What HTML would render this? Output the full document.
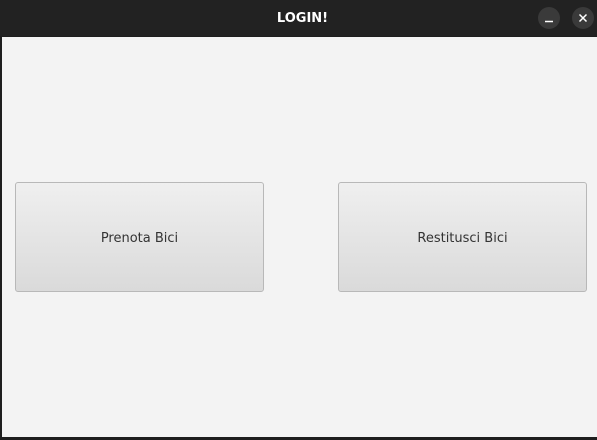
<!DOCTYPE html>
<html><head><style>
html,body{margin:0;padding:0;width:597px;height:440px;overflow:hidden;background:#1e1e1e;font-family:"DejaVu Sans","Liberation Sans",sans-serif}
.bar{position:absolute;left:0;top:0;width:597px;height:36px;background:#222222;}
.title{position:absolute;left:4px;width:597px;top:1px;height:36px;line-height:36px;text-align:center;color:#fff;font-weight:bold;font-size:13px}
.wb{position:absolute;top:7px;width:22px;height:22px;border-radius:50%;background:#3a3a3a}
.content{position:absolute;left:2px;top:37px;width:595px;height:400px;background:#f3f3f3}
.btn{position:absolute;top:182px;width:247px;height:108px;border:1px solid #b8b8b8;border-radius:3px;background:linear-gradient(#efefef,#dadada);color:#333;font-size:13px;text-align:center;line-height:112px;box-sizing:content-box}
</style></head><body>
<div class="bar"><div class="title">LOGIN!</div>
<div class="wb" style="left:538px"><svg width="22" height="22"><line x1="7" y1="14.5" x2="15" y2="14.5" stroke="#fff" stroke-width="1.5"/></svg></div>
<div class="wb" style="left:572px"><svg width="22" height="22"><path d="M7.5 7.5L14.5 14.5M14.5 7.5L7.5 14.5" stroke="#fff" stroke-width="1.5"/></svg></div>
</div>
<div class="content"></div>
<div class="btn" style="left:15px">Prenota Bici</div>
<div class="btn" style="left:338px">Restitusci Bici</div>
</body></html>
